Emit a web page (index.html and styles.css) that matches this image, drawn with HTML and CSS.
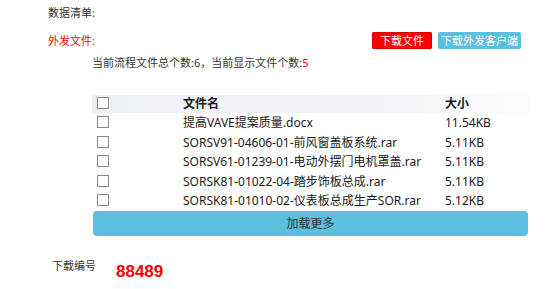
FILE: index.html
```html
<!DOCTYPE html>
<html lang="zh-CN">
<head>
    <meta charset="UTF-8">
    <meta name="viewport" content="width=device-width, initial-scale=1.0">
    <title>数据清单</title>
    <link rel="stylesheet" href="styles.css">
</head>
<body>
    <div class="wrap">
        <div class="title">数据清单:</div>

        <div class="send-row">
            <span class="send-label">外发文件:</span>
            <div class="btns">
                <span class="btn btn-red">下载文件</span>
                <span class="btn btn-blue">下载外发客户端</span>
            </div>
        </div>

        <div class="count">当前流程文件总个数:6，当前显示文件个数:<span class="red">5</span></div>

        <div class="files">
            <div class="row head">
                <div class="c-check"><span class="box"></span></div>
                <div class="c-name">文件名</div>
                <div class="c-size">大小</div>
            </div>
            <div class="row">
                <div class="c-check"><span class="box"></span></div>
                <div class="c-name">提高VAVE提案质量.docx</div>
                <div class="c-size">11.54KB</div>
            </div>
            <div class="row">
                <div class="c-check"><span class="box"></span></div>
                <div class="c-name">SORSV91-04606-01-前风窗盖板系统.rar</div>
                <div class="c-size">5.11KB</div>
            </div>
            <div class="row">
                <div class="c-check"><span class="box"></span></div>
                <div class="c-name">SORSV61-01239-01-电动外摆门电机罩盖.rar</div>
                <div class="c-size">5.11KB</div>
            </div>
            <div class="row">
                <div class="c-check"><span class="box"></span></div>
                <div class="c-name">SORSK81-01022-04-踏步饰板总成.rar</div>
                <div class="c-size">5.11KB</div>
            </div>
            <div class="row">
                <div class="c-check"><span class="box"></span></div>
                <div class="c-name">SORSK81-01010-02-仪表板总成生产SOR.rar</div>
                <div class="c-size">5.12KB</div>
            </div>
            <div class="more">加载更多</div>
        </div>

        <div class="code-row">
            <span class="code-label">下载编号</span>
            <span class="code">88489</span>
        </div>
    </div>
</body>
</html>
```

FILE: styles.css
```css
body {
    margin: 0;
    background: #fff;
    color: #333;
    font-family: "Noto Sans", "Noto Sans CJK SC", sans-serif;
    font-size: 11px;
}
.wrap {
    margin-left: 48px;
    width: 482px;
    padding-top: 4px;
}
.title {
    line-height: 17px;
}
.send-row {
    display: flex;
    justify-content: space-between;
    align-items: center;
    margin-top: 11px;
    padding-right: 9px;
}
.send-label {
    color: #f00;
    line-height: 17px;
}
.btns {
    display: flex;
    gap: 6px;
}
.btn {
    display: block;
    height: 17px;
    line-height: 17px;
    text-align: center;
    color: #fff;
    border-radius: 2px;
}
.btn-red {
    width: 60px;
    background: #f00;
    box-shadow: inset 0 0 0 1px #d40000;
}
.btn-blue {
    width: 83px;
    background: #5bc0de;
}
.count {
    margin-top: 5px;
    margin-left: 44px;
    line-height: 17px;
}
.red {
    color: #f00;
}
.files {
    margin-top: 24px;
    margin-left: 44px;
    width: 438px;
    font-size: 12px;
    color: #1a1a1a;
}
.row {
    display: flex;
    height: 19.5px;
    line-height: 19.5px;
}
.row.head {
    height: 18px;
    line-height: 18px;
    font-weight: bold;
    background: linear-gradient(to right, #eceff4, #f3f5f8 70%, #fafbfc);
}
.c-check {
    width: 91px;
    padding-left: 5px;
    box-sizing: border-box;
}
.box {
    display: inline-block;
    width: 10px;
    height: 10px;
    border: 1px solid #8a8a8a;
    background: #fff;
    vertical-align: -1px;
}
.c-name {
    width: 262px;
    white-space: nowrap;
}
.c-size {
    flex: 1;
}
.more {
    margin-left: 1px;
    width: 435px;
    height: 25px;
    line-height: 25px;
    text-align: center;
    background: #5bc0de;
    border-radius: 4px;
    color: #333;
    font-size: 12px;
}
.code-row {
    display: flex;
    align-items: flex-end;
    margin-top: 22px;
    margin-left: 4px;
}
.code-label {
    line-height: 16px;
    margin-bottom: 8px;
}
.code {
    margin-left: 20px;
    color: #f00;
    font-family: "Liberation Sans", Arial, sans-serif;
    font-weight: bold;
    font-size: 17px;
    line-height: 20px;
}
```
